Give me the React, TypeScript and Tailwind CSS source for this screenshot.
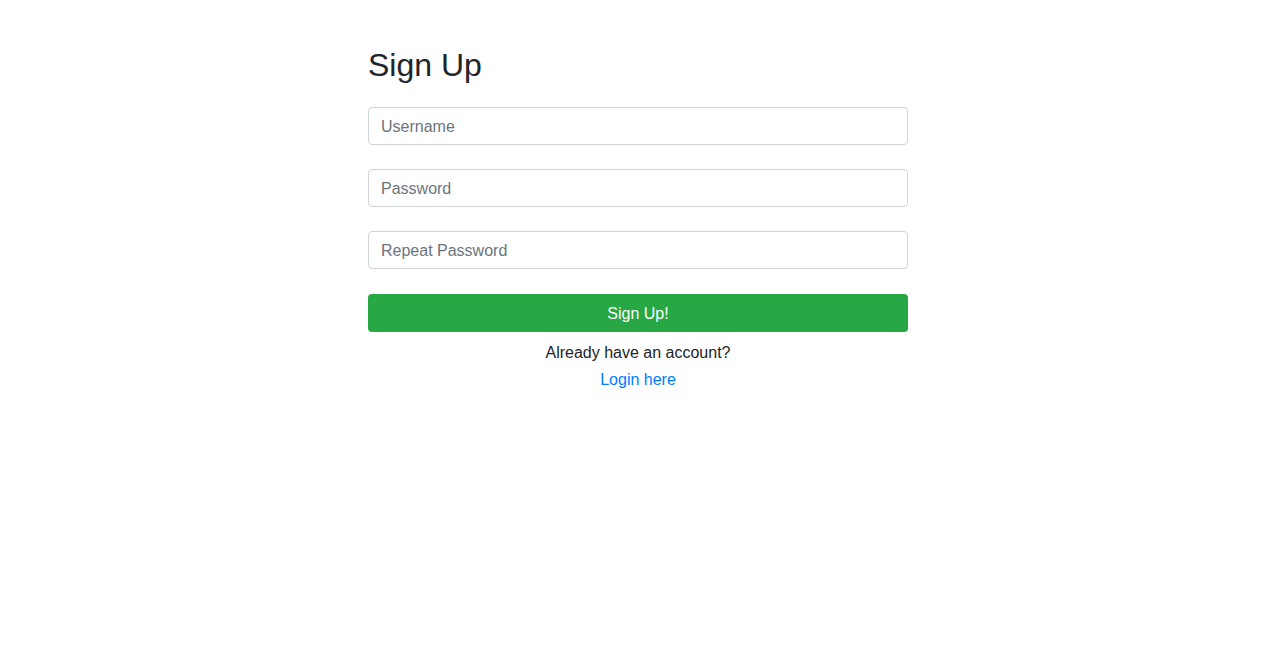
import { useState } from "react";

const inputClass =
  "block h-[38px] w-full rounded-[4px] border border-[#ced4da] bg-white px-3 pt-[7px] pb-[5px] text-base leading-6 text-[#495057] placeholder:text-[#6c757d] outline-none focus:border-[#80bdff]";

export default function App() {
  const [username, setUsername] = useState("");
  const [password, setPassword] = useState("");
  const [repeat, setRepeat] = useState("");

  return (
    <div
      className="min-h-screen bg-white text-[#212529]"
      style={{ fontFamily: '"Liberation Sans", Arial, sans-serif' }}
    >
      <div className="flex justify-center pr-[5px] pt-[46px]">
        <div className="w-[540px]">
          <h2 className="mb-[23px] text-[32px] font-normal leading-[1.2]">Sign Up</h2>
          <form onSubmit={(e) => e.preventDefault()}>
            <div className="mb-[24px]">
              <input
                type="text"
                placeholder="Username"
                value={username}
                onChange={(e) => setUsername(e.target.value)}
                className={inputClass}
              />
            </div>
            <div className="mb-[24px]">
              <input
                type="password"
                placeholder="Password"
                value={password}
                onChange={(e) => setPassword(e.target.value)}
                className={inputClass}
              />
            </div>
            <div className="mb-[25px]">
              <input
                type="password"
                placeholder="Repeat Password"
                value={repeat}
                onChange={(e) => setRepeat(e.target.value)}
                className={inputClass}
              />
            </div>
            <button
              type="submit"
              className="block h-[38px] w-full rounded-[4px] bg-[#28a745] pt-[2px] text-base leading-6 text-white"
            >
              Sign Up!
            </button>
          </form>
          <p className="mt-[9px] text-center text-base leading-6">Already have an account?</p>
          <p className="mt-[3px] text-center text-base leading-6">
            <a href="#" className="text-[#007bff]">
              Login here
            </a>
          </p>
        </div>
      </div>
    </div>
  );
}
